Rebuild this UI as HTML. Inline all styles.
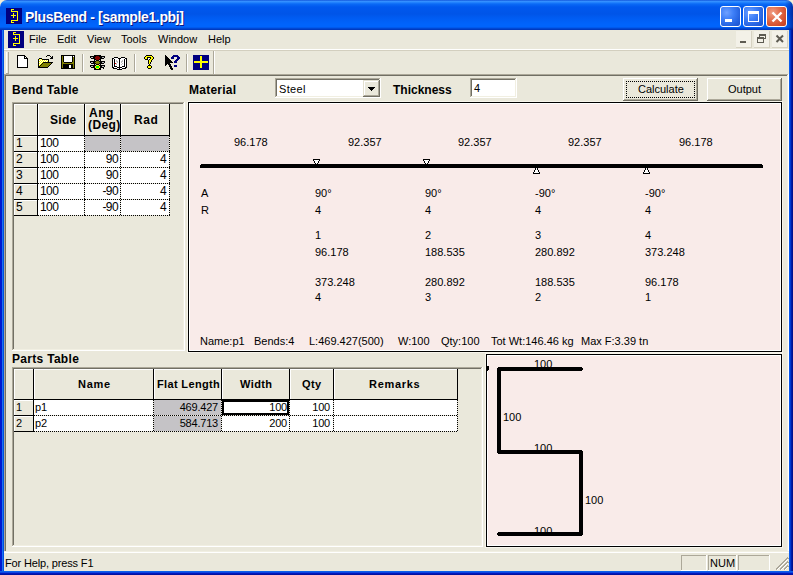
<!DOCTYPE html><html><head><meta charset="utf-8"><style>
html,body{margin:0;padding:0;}
body{width:793px;height:575px;position:relative;overflow:hidden;background:#F2EDD8;}
.r,.t{position:absolute;}
.t{white-space:pre;}
</style></head><body>
<div class="r" style="left:0;top:0;width:793px;height:575px;background:#EAE8DB;border-radius:7px 7px 0 0"></div>
<div class="r" style="left:0;top:0;width:793px;height:30px;border-radius:7px 7px 0 0;background:linear-gradient(to bottom,#0040D0 0px,#3D95FF 1px,#2A8AFF 2px,#0A6AF6 4px,#0058EE 7px,#0055E8 14px,#005CF2 18px,#0064FC 24px,#0064FC 27px,#0050E0 28px,#0040C8 29px,#0034B8 30px)"></div>
<div class="r" style="left:0px;top:30px;width:4px;height:545px;background:linear-gradient(to right,#0019CF 0,#0019CF 2px,#1A72F2 2px,#1A72F2 3px,#0050E0 3px)"></div>
<div class="r" style="left:789px;top:30px;width:4px;height:545px;background:linear-gradient(to right,#0A5AEE 0,#0A5AEE 1px,#0038D0 1px,#0038D0 2px,#001CA8 2px,#001CA8 3px,#001090 3px)"></div>
<div class="r" style="left:785px;top:0;width:8px;height:30px;border-top-right-radius:7px;background:linear-gradient(to right,rgba(0,20,120,0) 0,rgba(0,20,120,0.25) 4px,rgba(0,16,110,0.6) 8px)"></div>
<div class="r" style="left:0px;top:571px;width:793px;height:4px;background:linear-gradient(to bottom,#0050E0 0,#1A72F2 1px,#0019CF 2px,#001090 4px)"></div>
<svg class="r" style="left:6px;top:8px" width="16" height="16" viewBox="0 0 16 16">
<rect width="16" height="16" fill="#000080"/>
<path d="M8 1.5H5.5V3.5H11.5V12.5H5.5V14.5H8 M5 7.5H10 M7.5 5V10" stroke="#FFFF00" stroke-width="1" fill="none" shape-rendering="crispEdges"/>
</svg>
<div class="t" style="left:25px;top:9px;font:bold 14px/16px 'Liberation Sans',sans-serif;color:#fff;letter-spacing:-0.36px;text-shadow:1px 1px 0 #0A1883;">PlusBend - [sample1.pbj]</div>
<div class="r" style="left:720px;top:6px;width:19px;height:19px;border:1px solid #fff;border-radius:3px;background:radial-gradient(circle at 30% 30%,#6FA1FF 0,#3F80F8 35%,#2663E0 70%,#1B50CC 100%)"></div>
<div class="r" style="left:725px;top:19px;width:7px;height:3px;background:#fff"></div>
<div class="r" style="left:743px;top:6px;width:19px;height:19px;border:1px solid #fff;border-radius:3px;background:radial-gradient(circle at 30% 30%,#6FA1FF 0,#3F80F8 35%,#2663E0 70%,#1B50CC 100%)"></div>
<div class="r" style="left:748px;top:11px;width:11px;height:11px;box-sizing:border-box;border:1px solid #fff;border-top-width:3px"></div>
<div class="r" style="left:766px;top:6px;width:19px;height:19px;border:1px solid #fff;border-radius:3px;background:radial-gradient(circle at 30% 30%,#F1A088 0,#E37251 35%,#D4502F 70%,#C23D1D 100%)"></div>
<svg class="r" style="left:766px;top:6px" width="21" height="21"><path d="M6.5 6.5L15.5 15.5M15.5 6.5L6.5 15.5" stroke="#fff" stroke-width="2.4"/></svg>
<div class="r" style="left:4px;top:30px;width:785px;height:19px;background:#EAE8DB"></div>
<svg class="r" style="left:8px;top:31px" width="16" height="17" viewBox="0 0 16 17">
<rect width="16" height="17" fill="#000080"/>
<path d="M8 1.5H5.5V3.5H11.5V12.5H5.5V14.5H8 M5 7.5H10 M7.5 5V10" stroke="#FFFF00" stroke-width="1" fill="none" shape-rendering="crispEdges"/>
</svg>
<div class="t" style="left:29px;top:33px;font:11px/12px 'Liberation Sans',sans-serif;color:#000;">File</div>
<div class="t" style="left:57px;top:33px;font:11px/12px 'Liberation Sans',sans-serif;color:#000;">Edit</div>
<div class="t" style="left:87px;top:33px;font:11px/12px 'Liberation Sans',sans-serif;color:#000;">View</div>
<div class="t" style="left:121px;top:33px;font:11px/12px 'Liberation Sans',sans-serif;color:#000;">Tools</div>
<div class="t" style="left:158px;top:33px;font:11px/12px 'Liberation Sans',sans-serif;color:#000;">Window</div>
<div class="t" style="left:208px;top:33px;font:11px/12px 'Liberation Sans',sans-serif;color:#000;">Help</div>
<div class="r" style="left:736px;top:31px;width:16px;height:17px;background:#F3F1E8;box-shadow:inset -1px -1px 0 #D6D2C2"></div>
<div class="r" style="left:740px;top:41px;width:6px;height:2px;background:#5E5C53"></div>
<div class="r" style="left:754px;top:31px;width:16px;height:17px;background:#F3F1E8;box-shadow:inset -1px -1px 0 #D6D2C2"></div>
<div class="r" style="left:759px;top:34px;width:7px;height:5px;box-sizing:border-box;border:1px solid #5E5C53;border-top-width:2px"></div>
<div class="r" style="left:757px;top:37px;width:7px;height:6px;box-sizing:border-box;border:1px solid #5E5C53;border-top-width:2px;background:#F3F1E8"></div>
<div class="r" style="left:772px;top:31px;width:16px;height:17px;background:#F3F1E8;box-shadow:inset -1px -1px 0 #D6D2C2"></div>
<svg class="r" style="left:772px;top:31px" width="16" height="17"><path d="M4.5 4.5L11 11M11 4.5L4.5 11" stroke="#5E5C53" stroke-width="2"/></svg>
<div class="r" style="left:4px;top:49px;width:785px;height:1px;background:#fff"></div>
<div class="r" style="left:4px;top:50px;width:785px;height:24px;background:#EAE8DB"></div>
<div class="r" style="left:6px;top:52px;width:1px;height:21px;background:#fff"></div>
<div class="r" style="left:8px;top:52px;width:1px;height:21px;background:#ACA899"></div>
<div class="r" style="left:6px;top:73px;width:3px;height:1px;background:#ACA899"></div>
<div class="r" style="left:82px;top:54px;width:1px;height:18px;background:#ACA899"></div>
<div class="r" style="left:83px;top:54px;width:1px;height:18px;background:#fff"></div>
<div class="r" style="left:134px;top:54px;width:1px;height:18px;background:#ACA899"></div>
<div class="r" style="left:135px;top:54px;width:1px;height:18px;background:#fff"></div>
<div class="r" style="left:186px;top:54px;width:1px;height:18px;background:#ACA899"></div>
<div class="r" style="left:187px;top:54px;width:1px;height:18px;background:#fff"></div>
<div class="r" style="left:4px;top:50px;width:785px;height:1px;background:#D3CFBF"></div>
<div class="r" style="left:213px;top:51px;width:1px;height:23px;background:#ACA899"></div>
<div class="r" style="left:214px;top:51px;width:1px;height:23px;background:#fff"></div>
<svg class="r" style="left:17px;top:55px" width="11" height="13" shape-rendering="crispEdges"><rect x="0" y="0" width="8" height="1" fill="#000"/><rect x="0" y="1" width="1" height="1" fill="#000"/><rect x="1" y="1" width="6" height="1" fill="#fff"/><rect x="7" y="1" width="2" height="1" fill="#000"/><rect x="0" y="2" width="1" height="1" fill="#000"/><rect x="1" y="2" width="6" height="1" fill="#fff"/><rect x="7" y="2" width="1" height="1" fill="#000"/><rect x="8" y="2" width="1" height="1" fill="#fff"/><rect x="9" y="2" width="1" height="1" fill="#000"/><rect x="0" y="3" width="1" height="1" fill="#000"/><rect x="1" y="3" width="6" height="1" fill="#fff"/><rect x="7" y="3" width="4" height="1" fill="#000"/><rect x="0" y="4" width="1" height="1" fill="#000"/><rect x="1" y="4" width="9" height="1" fill="#fff"/><rect x="10" y="4" width="1" height="1" fill="#000"/><rect x="0" y="5" width="1" height="1" fill="#000"/><rect x="1" y="5" width="9" height="1" fill="#fff"/><rect x="10" y="5" width="1" height="1" fill="#000"/><rect x="0" y="6" width="1" height="1" fill="#000"/><rect x="1" y="6" width="9" height="1" fill="#fff"/><rect x="10" y="6" width="1" height="1" fill="#000"/><rect x="0" y="7" width="1" height="1" fill="#000"/><rect x="1" y="7" width="9" height="1" fill="#fff"/><rect x="10" y="7" width="1" height="1" fill="#000"/><rect x="0" y="8" width="1" height="1" fill="#000"/><rect x="1" y="8" width="9" height="1" fill="#fff"/><rect x="10" y="8" width="1" height="1" fill="#000"/><rect x="0" y="9" width="1" height="1" fill="#000"/><rect x="1" y="9" width="9" height="1" fill="#fff"/><rect x="10" y="9" width="1" height="1" fill="#000"/><rect x="0" y="10" width="1" height="1" fill="#000"/><rect x="1" y="10" width="9" height="1" fill="#fff"/><rect x="10" y="10" width="1" height="1" fill="#000"/><rect x="0" y="11" width="1" height="1" fill="#000"/><rect x="1" y="11" width="9" height="1" fill="#fff"/><rect x="10" y="11" width="1" height="1" fill="#000"/><rect x="0" y="12" width="11" height="1" fill="#000"/></svg><svg class="r" style="left:37px;top:54px" width="16" height="14" shape-rendering="crispEdges"><rect x="10" y="1" width="3" height="1" fill="#000"/><rect x="9" y="2" width="1" height="1" fill="#000"/><rect x="13" y="2" width="1" height="1" fill="#000"/><rect x="15" y="2" width="1" height="1" fill="#000"/><rect x="14" y="3" width="2" height="1" fill="#000"/><rect x="2" y="4" width="3" height="1" fill="#000"/><rect x="13" y="4" width="3" height="1" fill="#000"/><rect x="1" y="5" width="1" height="1" fill="#000"/><rect x="2" y="5" width="1" height="1" fill="#FFFF00"/><rect x="3" y="5" width="1" height="1" fill="#fff"/><rect x="4" y="5" width="1" height="1" fill="#FFFF00"/><rect x="5" y="5" width="7" height="1" fill="#000"/><rect x="1" y="6" width="1" height="1" fill="#000"/><rect x="2" y="6" width="1" height="1" fill="#fff"/><rect x="3" y="6" width="1" height="1" fill="#FFFF00"/><rect x="4" y="6" width="1" height="1" fill="#fff"/><rect x="5" y="6" width="1" height="1" fill="#FFFF00"/><rect x="6" y="6" width="1" height="1" fill="#fff"/><rect x="7" y="6" width="1" height="1" fill="#FFFF00"/><rect x="8" y="6" width="1" height="1" fill="#fff"/><rect x="9" y="6" width="1" height="1" fill="#FFFF00"/><rect x="10" y="6" width="1" height="1" fill="#fff"/><rect x="11" y="6" width="1" height="1" fill="#000"/><rect x="1" y="7" width="1" height="1" fill="#000"/><rect x="2" y="7" width="1" height="1" fill="#FFFF00"/><rect x="3" y="7" width="1" height="1" fill="#fff"/><rect x="4" y="7" width="1" height="1" fill="#FFFF00"/><rect x="5" y="7" width="1" height="1" fill="#fff"/><rect x="6" y="7" width="1" height="1" fill="#FFFF00"/><rect x="7" y="7" width="1" height="1" fill="#fff"/><rect x="8" y="7" width="1" height="1" fill="#FFFF00"/><rect x="9" y="7" width="1" height="1" fill="#fff"/><rect x="10" y="7" width="1" height="1" fill="#FFFF00"/><rect x="11" y="7" width="1" height="1" fill="#000"/><rect x="1" y="8" width="1" height="1" fill="#000"/><rect x="2" y="8" width="1" height="1" fill="#fff"/><rect x="3" y="8" width="1" height="1" fill="#FFFF00"/><rect x="4" y="8" width="1" height="1" fill="#fff"/><rect x="5" y="8" width="1" height="1" fill="#FFFF00"/><rect x="6" y="8" width="10" height="1" fill="#000"/><rect x="1" y="9" width="1" height="1" fill="#000"/><rect x="2" y="9" width="1" height="1" fill="#FFFF00"/><rect x="3" y="9" width="1" height="1" fill="#fff"/><rect x="4" y="9" width="1" height="1" fill="#FFFF00"/><rect x="5" y="9" width="1" height="1" fill="#000"/><rect x="6" y="9" width="8" height="1" fill="#808000"/><rect x="14" y="9" width="1" height="1" fill="#000"/><rect x="1" y="10" width="1" height="1" fill="#000"/><rect x="2" y="10" width="1" height="1" fill="#fff"/><rect x="3" y="10" width="1" height="1" fill="#FFFF00"/><rect x="4" y="10" width="1" height="1" fill="#000"/><rect x="5" y="10" width="8" height="1" fill="#808000"/><rect x="13" y="10" width="1" height="1" fill="#000"/><rect x="1" y="11" width="1" height="1" fill="#000"/><rect x="2" y="11" width="1" height="1" fill="#FFFF00"/><rect x="3" y="11" width="1" height="1" fill="#000"/><rect x="4" y="11" width="8" height="1" fill="#808000"/><rect x="12" y="11" width="1" height="1" fill="#000"/><rect x="1" y="12" width="2" height="1" fill="#000"/><rect x="3" y="12" width="8" height="1" fill="#808000"/><rect x="11" y="12" width="1" height="1" fill="#000"/><rect x="1" y="13" width="10" height="1" fill="#000"/></svg><svg class="r" style="left:61px;top:55px" width="14" height="14" shape-rendering="crispEdges"><rect x="0" y="0" width="14" height="1" fill="#000"/><rect x="0" y="1" width="1" height="1" fill="#000"/><rect x="1" y="1" width="1" height="1" fill="#808000"/><rect x="2" y="1" width="1" height="1" fill="#000"/><rect x="3" y="1" width="8" height="1" fill="#fff"/><rect x="11" y="1" width="1" height="1" fill="#000"/><rect x="12" y="1" width="1" height="1" fill="#fff"/><rect x="13" y="1" width="1" height="1" fill="#000"/><rect x="0" y="2" width="1" height="1" fill="#000"/><rect x="1" y="2" width="1" height="1" fill="#808000"/><rect x="2" y="2" width="1" height="1" fill="#000"/><rect x="3" y="2" width="8" height="1" fill="#fff"/><rect x="11" y="2" width="1" height="1" fill="#000"/><rect x="12" y="2" width="1" height="1" fill="#808000"/><rect x="13" y="2" width="1" height="1" fill="#000"/><rect x="0" y="3" width="1" height="1" fill="#000"/><rect x="1" y="3" width="1" height="1" fill="#808000"/><rect x="2" y="3" width="1" height="1" fill="#000"/><rect x="3" y="3" width="8" height="1" fill="#fff"/><rect x="11" y="3" width="1" height="1" fill="#000"/><rect x="12" y="3" width="1" height="1" fill="#808000"/><rect x="13" y="3" width="1" height="1" fill="#000"/><rect x="0" y="4" width="1" height="1" fill="#000"/><rect x="1" y="4" width="1" height="1" fill="#808000"/><rect x="2" y="4" width="1" height="1" fill="#000"/><rect x="3" y="4" width="8" height="1" fill="#fff"/><rect x="11" y="4" width="1" height="1" fill="#000"/><rect x="12" y="4" width="1" height="1" fill="#808000"/><rect x="13" y="4" width="1" height="1" fill="#000"/><rect x="0" y="5" width="1" height="1" fill="#000"/><rect x="1" y="5" width="1" height="1" fill="#808000"/><rect x="2" y="5" width="1" height="1" fill="#000"/><rect x="3" y="5" width="8" height="1" fill="#fff"/><rect x="11" y="5" width="1" height="1" fill="#000"/><rect x="12" y="5" width="1" height="1" fill="#808000"/><rect x="13" y="5" width="1" height="1" fill="#000"/><rect x="0" y="6" width="1" height="1" fill="#000"/><rect x="1" y="6" width="1" height="1" fill="#808000"/><rect x="2" y="6" width="1" height="1" fill="#000"/><rect x="3" y="6" width="8" height="1" fill="#fff"/><rect x="11" y="6" width="1" height="1" fill="#000"/><rect x="12" y="6" width="1" height="1" fill="#808000"/><rect x="13" y="6" width="1" height="1" fill="#000"/><rect x="0" y="7" width="1" height="1" fill="#000"/><rect x="1" y="7" width="2" height="1" fill="#808000"/><rect x="3" y="7" width="8" height="1" fill="#000"/><rect x="11" y="7" width="2" height="1" fill="#808000"/><rect x="13" y="7" width="1" height="1" fill="#000"/><rect x="0" y="8" width="1" height="1" fill="#000"/><rect x="1" y="8" width="12" height="1" fill="#808000"/><rect x="13" y="8" width="1" height="1" fill="#000"/><rect x="0" y="9" width="1" height="1" fill="#000"/><rect x="1" y="9" width="1" height="1" fill="#808000"/><rect x="2" y="9" width="10" height="1" fill="#000"/><rect x="12" y="9" width="1" height="1" fill="#808000"/><rect x="13" y="9" width="1" height="1" fill="#000"/><rect x="0" y="10" width="1" height="1" fill="#000"/><rect x="1" y="10" width="1" height="1" fill="#808000"/><rect x="2" y="10" width="6" height="1" fill="#000"/><rect x="8" y="10" width="2" height="1" fill="#fff"/><rect x="10" y="10" width="2" height="1" fill="#000"/><rect x="12" y="10" width="1" height="1" fill="#808000"/><rect x="13" y="10" width="1" height="1" fill="#000"/><rect x="0" y="11" width="1" height="1" fill="#000"/><rect x="1" y="11" width="1" height="1" fill="#808000"/><rect x="2" y="11" width="6" height="1" fill="#000"/><rect x="8" y="11" width="2" height="1" fill="#fff"/><rect x="10" y="11" width="2" height="1" fill="#000"/><rect x="12" y="11" width="1" height="1" fill="#808000"/><rect x="13" y="11" width="1" height="1" fill="#000"/><rect x="0" y="12" width="1" height="1" fill="#000"/><rect x="1" y="12" width="1" height="1" fill="#808000"/><rect x="2" y="12" width="6" height="1" fill="#000"/><rect x="8" y="12" width="2" height="1" fill="#fff"/><rect x="10" y="12" width="2" height="1" fill="#000"/><rect x="12" y="12" width="1" height="1" fill="#808000"/><rect x="13" y="12" width="1" height="1" fill="#000"/><rect x="0" y="13" width="14" height="1" fill="#000"/></svg><svg class="r" style="left:90px;top:55px" width="15" height="15" shape-rendering="crispEdges"><rect x="4" y="0" width="7" height="1" fill="#000"/><rect x="0" y="1" width="6" height="1" fill="#000"/><rect x="6" y="1" width="3" height="1" fill="#800000"/><rect x="9" y="1" width="6" height="1" fill="#000"/><rect x="0" y="2" width="1" height="1" fill="#000"/><rect x="1" y="2" width="2" height="1" fill="#C0C0C0"/><rect x="3" y="2" width="2" height="1" fill="#000"/><rect x="5" y="2" width="5" height="1" fill="#800000"/><rect x="10" y="2" width="2" height="1" fill="#000"/><rect x="12" y="2" width="2" height="1" fill="#C0C0C0"/><rect x="14" y="2" width="1" height="1" fill="#000"/><rect x="1" y="3" width="4" height="1" fill="#000"/><rect x="5" y="3" width="5" height="1" fill="#800000"/><rect x="10" y="3" width="4" height="1" fill="#000"/><rect x="4" y="4" width="2" height="1" fill="#000"/><rect x="6" y="4" width="3" height="1" fill="#800000"/><rect x="9" y="4" width="2" height="1" fill="#000"/><rect x="4" y="5" width="1" height="1" fill="#000"/><rect x="5" y="5" width="1" height="1" fill="#C0C0C0"/><rect x="6" y="5" width="3" height="1" fill="#000"/><rect x="9" y="5" width="1" height="1" fill="#C0C0C0"/><rect x="10" y="5" width="1" height="1" fill="#000"/><rect x="0" y="6" width="6" height="1" fill="#000"/><rect x="6" y="6" width="3" height="1" fill="#808000"/><rect x="9" y="6" width="6" height="1" fill="#000"/><rect x="0" y="7" width="1" height="1" fill="#000"/><rect x="1" y="7" width="2" height="1" fill="#C0C0C0"/><rect x="3" y="7" width="2" height="1" fill="#000"/><rect x="5" y="7" width="5" height="1" fill="#808000"/><rect x="10" y="7" width="2" height="1" fill="#000"/><rect x="12" y="7" width="2" height="1" fill="#C0C0C0"/><rect x="14" y="7" width="1" height="1" fill="#000"/><rect x="1" y="8" width="5" height="1" fill="#000"/><rect x="6" y="8" width="3" height="1" fill="#808000"/><rect x="9" y="8" width="5" height="1" fill="#000"/><rect x="4" y="9" width="1" height="1" fill="#000"/><rect x="5" y="9" width="1" height="1" fill="#C0C0C0"/><rect x="6" y="9" width="3" height="1" fill="#000"/><rect x="9" y="9" width="1" height="1" fill="#C0C0C0"/><rect x="10" y="9" width="1" height="1" fill="#000"/><rect x="0" y="10" width="6" height="1" fill="#000"/><rect x="6" y="10" width="3" height="1" fill="#FFFF00"/><rect x="9" y="10" width="6" height="1" fill="#000"/><rect x="0" y="11" width="1" height="1" fill="#000"/><rect x="1" y="11" width="2" height="1" fill="#C0C0C0"/><rect x="3" y="11" width="2" height="1" fill="#000"/><rect x="5" y="11" width="1" height="1" fill="#FFFF00"/><rect x="6" y="11" width="3" height="1" fill="#00FF00"/><rect x="9" y="11" width="1" height="1" fill="#FFFF00"/><rect x="10" y="11" width="2" height="1" fill="#000"/><rect x="12" y="11" width="2" height="1" fill="#C0C0C0"/><rect x="14" y="11" width="1" height="1" fill="#000"/><rect x="1" y="12" width="4" height="1" fill="#000"/><rect x="5" y="12" width="1" height="1" fill="#FFFF00"/><rect x="6" y="12" width="3" height="1" fill="#00FF00"/><rect x="9" y="12" width="1" height="1" fill="#FFFF00"/><rect x="10" y="12" width="4" height="1" fill="#000"/><rect x="4" y="13" width="2" height="1" fill="#000"/><rect x="6" y="13" width="3" height="1" fill="#FFFF00"/><rect x="9" y="13" width="2" height="1" fill="#000"/><rect x="13" y="13" width="1" height="1" fill="#000"/><rect x="4" y="14" width="7" height="1" fill="#000"/></svg><svg class="r" style="left:112px;top:57px" width="15" height="13" shape-rendering="crispEdges"><rect x="2" y="0" width="4" height="1" fill="#000"/><rect x="9" y="0" width="4" height="1" fill="#000"/><rect x="0" y="1" width="2" height="1" fill="#000"/><rect x="2" y="1" width="4" height="1" fill="#fff"/><rect x="6" y="1" width="3" height="1" fill="#000"/><rect x="9" y="1" width="4" height="1" fill="#fff"/><rect x="13" y="1" width="2" height="1" fill="#000"/><rect x="0" y="2" width="1" height="1" fill="#000"/><rect x="1" y="2" width="1" height="1" fill="#fff"/><rect x="2" y="2" width="1" height="1" fill="#000"/><rect x="3" y="2" width="4" height="1" fill="#fff"/><rect x="7" y="2" width="1" height="1" fill="#000"/><rect x="8" y="2" width="4" height="1" fill="#fff"/><rect x="12" y="2" width="1" height="1" fill="#000"/><rect x="13" y="2" width="1" height="1" fill="#fff"/><rect x="14" y="2" width="1" height="1" fill="#000"/><rect x="0" y="3" width="1" height="1" fill="#000"/><rect x="1" y="3" width="1" height="1" fill="#fff"/><rect x="2" y="3" width="1" height="1" fill="#000"/><rect x="3" y="3" width="1" height="1" fill="#fff"/><rect x="4" y="3" width="1" height="1" fill="#C0C0C0"/><rect x="5" y="3" width="2" height="1" fill="#fff"/><rect x="7" y="3" width="1" height="1" fill="#000"/><rect x="8" y="3" width="2" height="1" fill="#fff"/><rect x="10" y="3" width="1" height="1" fill="#C0C0C0"/><rect x="11" y="3" width="1" height="1" fill="#fff"/><rect x="12" y="3" width="1" height="1" fill="#000"/><rect x="13" y="3" width="1" height="1" fill="#fff"/><rect x="14" y="3" width="1" height="1" fill="#000"/><rect x="0" y="4" width="1" height="1" fill="#000"/><rect x="1" y="4" width="1" height="1" fill="#fff"/><rect x="2" y="4" width="1" height="1" fill="#000"/><rect x="3" y="4" width="1" height="1" fill="#fff"/><rect x="4" y="4" width="2" height="1" fill="#C0C0C0"/><rect x="6" y="4" width="1" height="1" fill="#fff"/><rect x="7" y="4" width="1" height="1" fill="#000"/><rect x="8" y="4" width="1" height="1" fill="#fff"/><rect x="9" y="4" width="2" height="1" fill="#C0C0C0"/><rect x="11" y="4" width="1" height="1" fill="#fff"/><rect x="12" y="4" width="1" height="1" fill="#000"/><rect x="13" y="4" width="1" height="1" fill="#fff"/><rect x="14" y="4" width="1" height="1" fill="#000"/><rect x="0" y="5" width="1" height="1" fill="#000"/><rect x="1" y="5" width="1" height="1" fill="#fff"/><rect x="2" y="5" width="1" height="1" fill="#000"/><rect x="3" y="5" width="2" height="1" fill="#fff"/><rect x="5" y="5" width="1" height="1" fill="#C0C0C0"/><rect x="6" y="5" width="1" height="1" fill="#fff"/><rect x="7" y="5" width="1" height="1" fill="#000"/><rect x="8" y="5" width="1" height="1" fill="#fff"/><rect x="9" y="5" width="1" height="1" fill="#C0C0C0"/><rect x="10" y="5" width="2" height="1" fill="#fff"/><rect x="12" y="5" width="1" height="1" fill="#000"/><rect x="13" y="5" width="1" height="1" fill="#fff"/><rect x="14" y="5" width="1" height="1" fill="#000"/><rect x="0" y="6" width="1" height="1" fill="#000"/><rect x="1" y="6" width="1" height="1" fill="#fff"/><rect x="2" y="6" width="1" height="1" fill="#000"/><rect x="3" y="6" width="1" height="1" fill="#FF0000"/><rect x="4" y="6" width="1" height="1" fill="#C0C0C0"/><rect x="5" y="6" width="2" height="1" fill="#fff"/><rect x="7" y="6" width="1" height="1" fill="#000"/><rect x="8" y="6" width="2" height="1" fill="#fff"/><rect x="10" y="6" width="1" height="1" fill="#C0C0C0"/><rect x="11" y="6" width="1" height="1" fill="#fff"/><rect x="12" y="6" width="1" height="1" fill="#000"/><rect x="13" y="6" width="1" height="1" fill="#fff"/><rect x="14" y="6" width="1" height="1" fill="#000"/><rect x="0" y="7" width="1" height="1" fill="#000"/><rect x="1" y="7" width="1" height="1" fill="#fff"/><rect x="2" y="7" width="1" height="1" fill="#000"/><rect x="3" y="7" width="1" height="1" fill="#fff"/><rect x="4" y="7" width="1" height="1" fill="#C0C0C0"/><rect x="5" y="7" width="2" height="1" fill="#fff"/><rect x="7" y="7" width="1" height="1" fill="#000"/><rect x="8" y="7" width="1" height="1" fill="#fff"/><rect x="9" y="7" width="1" height="1" fill="#C0C0C0"/><rect x="10" y="7" width="2" height="1" fill="#fff"/><rect x="12" y="7" width="1" height="1" fill="#000"/><rect x="13" y="7" width="1" height="1" fill="#fff"/><rect x="14" y="7" width="1" height="1" fill="#000"/><rect x="0" y="8" width="1" height="1" fill="#000"/><rect x="1" y="8" width="1" height="1" fill="#fff"/><rect x="2" y="8" width="1" height="1" fill="#000"/><rect x="3" y="8" width="4" height="1" fill="#fff"/><rect x="7" y="8" width="1" height="1" fill="#000"/><rect x="8" y="8" width="4" height="1" fill="#fff"/><rect x="12" y="8" width="1" height="1" fill="#000"/><rect x="13" y="8" width="1" height="1" fill="#fff"/><rect x="14" y="8" width="1" height="1" fill="#000"/><rect x="0" y="9" width="1" height="1" fill="#000"/><rect x="1" y="9" width="1" height="1" fill="#fff"/><rect x="2" y="9" width="3" height="1" fill="#000"/><rect x="5" y="9" width="2" height="1" fill="#fff"/><rect x="7" y="9" width="1" height="1" fill="#000"/><rect x="8" y="9" width="2" height="1" fill="#fff"/><rect x="10" y="9" width="3" height="1" fill="#000"/><rect x="13" y="9" width="1" height="1" fill="#fff"/><rect x="14" y="9" width="1" height="1" fill="#000"/><rect x="0" y="10" width="2" height="1" fill="#000"/><rect x="2" y="10" width="3" height="1" fill="#fff"/><rect x="5" y="10" width="5" height="1" fill="#000"/><rect x="10" y="10" width="3" height="1" fill="#fff"/><rect x="13" y="10" width="2" height="1" fill="#000"/><rect x="1" y="11" width="4" height="1" fill="#000"/><rect x="5" y="11" width="2" height="1" fill="#fff"/><rect x="7" y="11" width="1" height="1" fill="#000"/><rect x="8" y="11" width="2" height="1" fill="#fff"/><rect x="10" y="11" width="4" height="1" fill="#000"/><rect x="5" y="12" width="5" height="1" fill="#000"/></svg><svg class="r" style="left:144px;top:55px" width="10" height="14" shape-rendering="crispEdges"><rect x="2" y="0" width="6" height="1" fill="#000"/><rect x="1" y="1" width="1" height="1" fill="#000"/><rect x="2" y="1" width="6" height="1" fill="#FFFF00"/><rect x="8" y="1" width="1" height="1" fill="#000"/><rect x="0" y="2" width="1" height="1" fill="#000"/><rect x="1" y="2" width="2" height="1" fill="#FFFF00"/><rect x="3" y="2" width="4" height="1" fill="#000"/><rect x="7" y="2" width="2" height="1" fill="#FFFF00"/><rect x="9" y="2" width="1" height="1" fill="#000"/><rect x="0" y="3" width="1" height="1" fill="#000"/><rect x="1" y="3" width="2" height="1" fill="#FFFF00"/><rect x="3" y="3" width="1" height="1" fill="#000"/><rect x="4" y="3" width="2" height="1" fill="#fff"/><rect x="6" y="3" width="1" height="1" fill="#000"/><rect x="7" y="3" width="2" height="1" fill="#FFFF00"/><rect x="9" y="3" width="1" height="1" fill="#000"/><rect x="1" y="4" width="3" height="1" fill="#000"/><rect x="5" y="4" width="1" height="1" fill="#000"/><rect x="6" y="4" width="2" height="1" fill="#FFFF00"/><rect x="8" y="4" width="1" height="1" fill="#000"/><rect x="4" y="5" width="1" height="1" fill="#000"/><rect x="5" y="5" width="2" height="1" fill="#FFFF00"/><rect x="7" y="5" width="1" height="1" fill="#000"/><rect x="4" y="6" width="1" height="1" fill="#000"/><rect x="5" y="6" width="2" height="1" fill="#FFFF00"/><rect x="7" y="6" width="1" height="1" fill="#000"/><rect x="4" y="7" width="1" height="1" fill="#000"/><rect x="5" y="7" width="1" height="1" fill="#FFFF00"/><rect x="6" y="7" width="1" height="1" fill="#000"/><rect x="4" y="8" width="1" height="1" fill="#000"/><rect x="5" y="8" width="1" height="1" fill="#FFFF00"/><rect x="6" y="8" width="1" height="1" fill="#000"/><rect x="5" y="9" width="1" height="1" fill="#000"/><rect x="4" y="10" width="3" height="1" fill="#000"/><rect x="3" y="11" width="1" height="1" fill="#000"/><rect x="4" y="11" width="3" height="1" fill="#FFFF00"/><rect x="7" y="11" width="1" height="1" fill="#000"/><rect x="3" y="12" width="1" height="1" fill="#000"/><rect x="4" y="12" width="3" height="1" fill="#FFFF00"/><rect x="7" y="12" width="1" height="1" fill="#000"/><rect x="4" y="13" width="3" height="1" fill="#000"/></svg><svg class="r" style="left:165px;top:55px" width="8" height="15" shape-rendering="crispEdges"><rect x="0" y="0" width="1" height="1" fill="#000"/><rect x="0" y="1" width="2" height="1" fill="#000"/><rect x="0" y="2" width="3" height="1" fill="#000"/><rect x="0" y="3" width="4" height="1" fill="#000"/><rect x="0" y="4" width="5" height="1" fill="#000"/><rect x="0" y="5" width="6" height="1" fill="#000"/><rect x="0" y="6" width="7" height="1" fill="#000"/><rect x="0" y="7" width="8" height="1" fill="#000"/><rect x="0" y="8" width="5" height="1" fill="#000"/><rect x="0" y="9" width="2" height="1" fill="#000"/><rect x="3" y="9" width="3" height="1" fill="#000"/><rect x="0" y="10" width="1" height="1" fill="#000"/><rect x="4" y="10" width="2" height="1" fill="#000"/><rect x="4" y="11" width="3" height="1" fill="#000"/><rect x="5" y="12" width="2" height="1" fill="#000"/><rect x="5" y="13" width="3" height="1" fill="#000"/><rect x="6" y="14" width="2" height="1" fill="#000"/></svg><svg class="r" style="left:171px;top:55px" width="9" height="12" shape-rendering="crispEdges"><rect x="2" y="0" width="5" height="1" fill="#000080"/><rect x="1" y="1" width="7" height="1" fill="#000080"/><rect x="0" y="2" width="3" height="1" fill="#000080"/><rect x="6" y="2" width="3" height="1" fill="#000080"/><rect x="0" y="3" width="3" height="1" fill="#000080"/><rect x="6" y="3" width="3" height="1" fill="#000080"/><rect x="5" y="4" width="3" height="1" fill="#000080"/><rect x="4" y="5" width="3" height="1" fill="#000080"/><rect x="3" y="6" width="3" height="1" fill="#000080"/><rect x="3" y="7" width="3" height="1" fill="#000080"/><rect x="3" y="10" width="3" height="1" fill="#000080"/><rect x="3" y="11" width="3" height="1" fill="#000080"/></svg><div class="r" style="left:193px;top:55px;width:16px;height:15px;background:#000080"></div><div class="r" style="left:194px;top:61px;width:14px;height:2px;background:#FFFF00"></div><div class="r" style="left:200px;top:56px;width:2px;height:12px;background:#FFFF00"></div>
<div class="r" style="left:4px;top:74px;width:785px;height:1px;background:#ACA899"></div>
<div class="r" style="left:4px;top:75px;width:785px;height:1px;background:#716F64"></div>
<div class="r" style="left:4px;top:74px;width:1px;height:478px;background:#ACA899"></div>
<div class="r" style="left:5px;top:75px;width:1px;height:476px;background:#716F64"></div>
<div class="r" style="left:787px;top:75px;width:1px;height:477px;background:#F1EFE2"></div>
<div class="r" style="left:788px;top:74px;width:1px;height:479px;background:#FFFFFF"></div>
<div class="t" style="left:12px;top:83px;font:bold 12px/14px 'Liberation Sans',sans-serif;color:#000;letter-spacing:0.3px;">Bend Table</div>
<div class="r" style="left:12px;top:102px;width:173px;height:1px;background:#ACA899"></div>
<div class="r" style="left:12px;top:102px;width:1px;height:249px;background:#ACA899"></div>
<div class="r" style="left:13px;top:103px;width:171px;height:1px;background:#716F64"></div>
<div class="r" style="left:13px;top:103px;width:1px;height:247px;background:#716F64"></div>
<div class="r" style="left:12px;top:350px;width:173px;height:1px;background:#FFFFFF"></div>
<div class="r" style="left:184px;top:102px;width:1px;height:249px;background:#FFFFFF"></div>
<div class="r" style="left:13px;top:349px;width:171px;height:1px;background:#F1EFE2"></div>
<div class="r" style="left:183px;top:103px;width:1px;height:247px;background:#F1EFE2"></div>
<div class="r" style="left:14px;top:104px;width:23px;height:1px;background:#fff"></div>
<div class="r" style="left:14px;top:104px;width:1px;height:31px;background:#fff"></div>
<div class="r" style="left:37px;top:104px;width:1px;height:32px;background:#000"></div>
<div class="r" style="left:14px;top:135px;width:24px;height:1px;background:#000"></div>
<div class="r" style="left:38px;top:104px;width:46px;height:1px;background:#fff"></div>
<div class="r" style="left:38px;top:104px;width:1px;height:31px;background:#fff"></div>
<div class="r" style="left:84px;top:104px;width:1px;height:32px;background:#000"></div>
<div class="r" style="left:38px;top:135px;width:47px;height:1px;background:#000"></div>
<div class="r" style="left:85px;top:104px;width:35px;height:1px;background:#fff"></div>
<div class="r" style="left:85px;top:104px;width:1px;height:31px;background:#fff"></div>
<div class="r" style="left:120px;top:104px;width:1px;height:32px;background:#000"></div>
<div class="r" style="left:85px;top:135px;width:36px;height:1px;background:#000"></div>
<div class="r" style="left:121px;top:104px;width:48px;height:1px;background:#fff"></div>
<div class="r" style="left:121px;top:104px;width:1px;height:31px;background:#fff"></div>
<div class="r" style="left:169px;top:104px;width:1px;height:32px;background:#000"></div>
<div class="r" style="left:121px;top:135px;width:49px;height:1px;background:#000"></div>
<div class="r" style="left:14px;top:136px;width:23px;height:1px;background:#fff"></div>
<div class="r" style="left:14px;top:136px;width:1px;height:15px;background:#fff"></div>
<div class="r" style="left:37px;top:136px;width:1px;height:16px;background:#000"></div>
<div class="r" style="left:14px;top:151px;width:24px;height:1px;background:#000"></div>
<div class="r" style="left:38px;top:136px;width:46px;height:15px;background:#FFFFFF"></div>
<div class="r" style="left:84px;top:136px;width:1px;height:16px;background:repeating-linear-gradient(to bottom,#000 0,#000 1px,transparent 1px,transparent 2px)"></div>
<div class="r" style="left:38px;top:151px;width:47px;height:1px;background:repeating-linear-gradient(to right,#000 0,#000 1px,transparent 1px,transparent 2px)"></div>
<div class="r" style="left:85px;top:136px;width:35px;height:15px;background:#C5C3C6"></div>
<div class="r" style="left:120px;top:136px;width:1px;height:16px;background:repeating-linear-gradient(to bottom,#000 0,#000 1px,transparent 1px,transparent 2px)"></div>
<div class="r" style="left:85px;top:151px;width:36px;height:1px;background:repeating-linear-gradient(to right,#000 0,#000 1px,transparent 1px,transparent 2px)"></div>
<div class="r" style="left:121px;top:136px;width:48px;height:15px;background:#C5C3C6"></div>
<div class="r" style="left:169px;top:136px;width:1px;height:16px;background:repeating-linear-gradient(to bottom,#000 0,#000 1px,transparent 1px,transparent 2px)"></div>
<div class="r" style="left:121px;top:151px;width:49px;height:1px;background:repeating-linear-gradient(to right,#000 0,#000 1px,transparent 1px,transparent 2px)"></div>
<div class="r" style="left:14px;top:152px;width:23px;height:1px;background:#fff"></div>
<div class="r" style="left:14px;top:152px;width:1px;height:15px;background:#fff"></div>
<div class="r" style="left:37px;top:152px;width:1px;height:16px;background:#000"></div>
<div class="r" style="left:14px;top:167px;width:24px;height:1px;background:#000"></div>
<div class="r" style="left:38px;top:152px;width:46px;height:15px;background:#FFFFFF"></div>
<div class="r" style="left:84px;top:152px;width:1px;height:16px;background:repeating-linear-gradient(to bottom,#000 0,#000 1px,transparent 1px,transparent 2px)"></div>
<div class="r" style="left:38px;top:167px;width:47px;height:1px;background:repeating-linear-gradient(to right,#000 0,#000 1px,transparent 1px,transparent 2px)"></div>
<div class="r" style="left:85px;top:152px;width:35px;height:15px;background:#FFFFFF"></div>
<div class="r" style="left:120px;top:152px;width:1px;height:16px;background:repeating-linear-gradient(to bottom,#000 0,#000 1px,transparent 1px,transparent 2px)"></div>
<div class="r" style="left:85px;top:167px;width:36px;height:1px;background:repeating-linear-gradient(to right,#000 0,#000 1px,transparent 1px,transparent 2px)"></div>
<div class="r" style="left:121px;top:152px;width:48px;height:15px;background:#FFFFFF"></div>
<div class="r" style="left:169px;top:152px;width:1px;height:16px;background:repeating-linear-gradient(to bottom,#000 0,#000 1px,transparent 1px,transparent 2px)"></div>
<div class="r" style="left:121px;top:167px;width:49px;height:1px;background:repeating-linear-gradient(to right,#000 0,#000 1px,transparent 1px,transparent 2px)"></div>
<div class="r" style="left:14px;top:168px;width:23px;height:1px;background:#fff"></div>
<div class="r" style="left:14px;top:168px;width:1px;height:15px;background:#fff"></div>
<div class="r" style="left:37px;top:168px;width:1px;height:16px;background:#000"></div>
<div class="r" style="left:14px;top:183px;width:24px;height:1px;background:#000"></div>
<div class="r" style="left:38px;top:168px;width:46px;height:15px;background:#FFFFFF"></div>
<div class="r" style="left:84px;top:168px;width:1px;height:16px;background:repeating-linear-gradient(to bottom,#000 0,#000 1px,transparent 1px,transparent 2px)"></div>
<div class="r" style="left:38px;top:183px;width:47px;height:1px;background:repeating-linear-gradient(to right,#000 0,#000 1px,transparent 1px,transparent 2px)"></div>
<div class="r" style="left:85px;top:168px;width:35px;height:15px;background:#FFFFFF"></div>
<div class="r" style="left:120px;top:168px;width:1px;height:16px;background:repeating-linear-gradient(to bottom,#000 0,#000 1px,transparent 1px,transparent 2px)"></div>
<div class="r" style="left:85px;top:183px;width:36px;height:1px;background:repeating-linear-gradient(to right,#000 0,#000 1px,transparent 1px,transparent 2px)"></div>
<div class="r" style="left:121px;top:168px;width:48px;height:15px;background:#FFFFFF"></div>
<div class="r" style="left:169px;top:168px;width:1px;height:16px;background:repeating-linear-gradient(to bottom,#000 0,#000 1px,transparent 1px,transparent 2px)"></div>
<div class="r" style="left:121px;top:183px;width:49px;height:1px;background:repeating-linear-gradient(to right,#000 0,#000 1px,transparent 1px,transparent 2px)"></div>
<div class="r" style="left:14px;top:184px;width:23px;height:1px;background:#fff"></div>
<div class="r" style="left:14px;top:184px;width:1px;height:15px;background:#fff"></div>
<div class="r" style="left:37px;top:184px;width:1px;height:16px;background:#000"></div>
<div class="r" style="left:14px;top:199px;width:24px;height:1px;background:#000"></div>
<div class="r" style="left:38px;top:184px;width:46px;height:15px;background:#FFFFFF"></div>
<div class="r" style="left:84px;top:184px;width:1px;height:16px;background:repeating-linear-gradient(to bottom,#000 0,#000 1px,transparent 1px,transparent 2px)"></div>
<div class="r" style="left:38px;top:199px;width:47px;height:1px;background:repeating-linear-gradient(to right,#000 0,#000 1px,transparent 1px,transparent 2px)"></div>
<div class="r" style="left:85px;top:184px;width:35px;height:15px;background:#FFFFFF"></div>
<div class="r" style="left:120px;top:184px;width:1px;height:16px;background:repeating-linear-gradient(to bottom,#000 0,#000 1px,transparent 1px,transparent 2px)"></div>
<div class="r" style="left:85px;top:199px;width:36px;height:1px;background:repeating-linear-gradient(to right,#000 0,#000 1px,transparent 1px,transparent 2px)"></div>
<div class="r" style="left:121px;top:184px;width:48px;height:15px;background:#FFFFFF"></div>
<div class="r" style="left:169px;top:184px;width:1px;height:16px;background:repeating-linear-gradient(to bottom,#000 0,#000 1px,transparent 1px,transparent 2px)"></div>
<div class="r" style="left:121px;top:199px;width:49px;height:1px;background:repeating-linear-gradient(to right,#000 0,#000 1px,transparent 1px,transparent 2px)"></div>
<div class="r" style="left:14px;top:200px;width:23px;height:1px;background:#fff"></div>
<div class="r" style="left:14px;top:200px;width:1px;height:15px;background:#fff"></div>
<div class="r" style="left:37px;top:200px;width:1px;height:16px;background:#000"></div>
<div class="r" style="left:14px;top:215px;width:24px;height:1px;background:#000"></div>
<div class="r" style="left:38px;top:200px;width:46px;height:15px;background:#FFFFFF"></div>
<div class="r" style="left:84px;top:200px;width:1px;height:16px;background:repeating-linear-gradient(to bottom,#000 0,#000 1px,transparent 1px,transparent 2px)"></div>
<div class="r" style="left:38px;top:215px;width:47px;height:1px;background:repeating-linear-gradient(to right,#000 0,#000 1px,transparent 1px,transparent 2px)"></div>
<div class="r" style="left:85px;top:200px;width:35px;height:15px;background:#FFFFFF"></div>
<div class="r" style="left:120px;top:200px;width:1px;height:16px;background:repeating-linear-gradient(to bottom,#000 0,#000 1px,transparent 1px,transparent 2px)"></div>
<div class="r" style="left:85px;top:215px;width:36px;height:1px;background:repeating-linear-gradient(to right,#000 0,#000 1px,transparent 1px,transparent 2px)"></div>
<div class="r" style="left:121px;top:200px;width:48px;height:15px;background:#FFFFFF"></div>
<div class="r" style="left:169px;top:200px;width:1px;height:16px;background:repeating-linear-gradient(to bottom,#000 0,#000 1px,transparent 1px,transparent 2px)"></div>
<div class="r" style="left:121px;top:215px;width:49px;height:1px;background:repeating-linear-gradient(to right,#000 0,#000 1px,transparent 1px,transparent 2px)"></div>
<div class="t" style="left:50px;top:113px;font:bold 12px/14px 'Liberation Sans',sans-serif;color:#000;letter-spacing:0.3px;">Side</div>
<div class="t" style="left:89px;top:106px;font:bold 12px/14px 'Liberation Sans',sans-serif;color:#000;letter-spacing:0.5px;">Ang</div>
<div class="t" style="left:88px;top:118px;font:bold 12px/14px 'Liberation Sans',sans-serif;color:#000;letter-spacing:0.4px;">(Deg)</div>
<div class="t" style="left:134px;top:113px;font:bold 12px/14px 'Liberation Sans',sans-serif;color:#000;letter-spacing:0.6px;">Rad</div>
<div class="t" style="left:16px;top:136px;font:12px/14px 'Liberation Sans',sans-serif;color:#000;letter-spacing:-0.6px;">1</div>
<div class="t" style="left:40px;top:136px;font:12px/14px 'Liberation Sans',sans-serif;color:#000;letter-spacing:-0.6px;">100</div>
<div class="t" style="left:16px;top:152px;font:12px/14px 'Liberation Sans',sans-serif;color:#000;letter-spacing:-0.6px;">2</div>
<div class="t" style="left:40px;top:152px;font:12px/14px 'Liberation Sans',sans-serif;color:#000;letter-spacing:-0.6px;">100</div>
<div class="t" style="left:16px;top:168px;font:12px/14px 'Liberation Sans',sans-serif;color:#000;letter-spacing:-0.6px;">3</div>
<div class="t" style="left:40px;top:168px;font:12px/14px 'Liberation Sans',sans-serif;color:#000;letter-spacing:-0.6px;">100</div>
<div class="t" style="left:16px;top:184px;font:12px/14px 'Liberation Sans',sans-serif;color:#000;letter-spacing:-0.6px;">4</div>
<div class="t" style="left:40px;top:184px;font:12px/14px 'Liberation Sans',sans-serif;color:#000;letter-spacing:-0.6px;">100</div>
<div class="t" style="left:16px;top:200px;font:12px/14px 'Liberation Sans',sans-serif;color:#000;letter-spacing:-0.6px;">5</div>
<div class="t" style="left:40px;top:200px;font:12px/14px 'Liberation Sans',sans-serif;color:#000;letter-spacing:-0.6px;">100</div>
<div class="t" style="left:60px;top:152px;font:12px/14px 'Liberation Sans',sans-serif;color:#000;letter-spacing:-0.6px;width:58px;text-align:right;">90</div>
<div class="t" style="left:100px;top:152px;font:12px/14px 'Liberation Sans',sans-serif;color:#000;letter-spacing:-0.6px;width:66px;text-align:right;">4</div>
<div class="t" style="left:60px;top:168px;font:12px/14px 'Liberation Sans',sans-serif;color:#000;letter-spacing:-0.6px;width:58px;text-align:right;">90</div>
<div class="t" style="left:100px;top:168px;font:12px/14px 'Liberation Sans',sans-serif;color:#000;letter-spacing:-0.6px;width:66px;text-align:right;">4</div>
<div class="t" style="left:60px;top:184px;font:12px/14px 'Liberation Sans',sans-serif;color:#000;letter-spacing:-0.6px;width:58px;text-align:right;">-90</div>
<div class="t" style="left:100px;top:184px;font:12px/14px 'Liberation Sans',sans-serif;color:#000;letter-spacing:-0.6px;width:66px;text-align:right;">4</div>
<div class="t" style="left:60px;top:200px;font:12px/14px 'Liberation Sans',sans-serif;color:#000;letter-spacing:-0.6px;width:58px;text-align:right;">-90</div>
<div class="t" style="left:100px;top:200px;font:12px/14px 'Liberation Sans',sans-serif;color:#000;letter-spacing:-0.6px;width:66px;text-align:right;">4</div>
<div class="t" style="left:189px;top:83px;font:bold 12px/14px 'Liberation Sans',sans-serif;color:#000;letter-spacing:0.25px;">Material</div>
<div class="r" style="left:275px;top:78px;width:106px;height:20px;background:#fff"></div>
<div class="r" style="left:275px;top:78px;width:106px;height:1px;background:#ACA899"></div>
<div class="r" style="left:275px;top:78px;width:1px;height:20px;background:#ACA899"></div>
<div class="r" style="left:276px;top:79px;width:104px;height:1px;background:#716F64"></div>
<div class="r" style="left:276px;top:79px;width:1px;height:18px;background:#716F64"></div>
<div class="r" style="left:275px;top:97px;width:106px;height:1px;background:#FFFFFF"></div>
<div class="r" style="left:380px;top:78px;width:1px;height:20px;background:#FFFFFF"></div>
<div class="r" style="left:276px;top:96px;width:104px;height:1px;background:#F1EFE2"></div>
<div class="r" style="left:379px;top:79px;width:1px;height:18px;background:#F1EFE2"></div>
<div class="r" style="left:363px;top:80px;width:17px;height:17px;background:#EAE8DB;box-shadow:inset -1px -1px 0 #716F64, inset 1px 1px 0 #E3E0D0, inset -2px -2px 0 #ACA899, inset 2px 2px 0 #fff"></div>
<svg class="r" style="left:368px;top:87px" width="7" height="4" shape-rendering="crispEdges"><path d="M0 0H7V1H6V2H5V3H4V4H3V3H2V2H1V1H0Z" fill="#000"/></svg>
<div class="t" style="left:279px;top:83px;font:11px/12px 'Liberation Sans',sans-serif;color:#000;letter-spacing:0.35px;">Steel</div>
<div class="t" style="left:393px;top:83px;font:bold 12px/14px 'Liberation Sans',sans-serif;color:#000;">Thickness</div>
<div class="r" style="left:470px;top:78px;width:47px;height:20px;background:#fff"></div>
<div class="r" style="left:470px;top:78px;width:47px;height:1px;background:#ACA899"></div>
<div class="r" style="left:470px;top:78px;width:1px;height:20px;background:#ACA899"></div>
<div class="r" style="left:471px;top:79px;width:45px;height:1px;background:#716F64"></div>
<div class="r" style="left:471px;top:79px;width:1px;height:18px;background:#716F64"></div>
<div class="r" style="left:470px;top:97px;width:47px;height:1px;background:#FFFFFF"></div>
<div class="r" style="left:516px;top:78px;width:1px;height:20px;background:#FFFFFF"></div>
<div class="r" style="left:471px;top:96px;width:45px;height:1px;background:#F1EFE2"></div>
<div class="r" style="left:515px;top:79px;width:1px;height:18px;background:#F1EFE2"></div>
<div class="t" style="left:474px;top:82px;font:11px/12px 'Liberation Sans',sans-serif;color:#000;">4</div>
<div class="r" style="left:623px;top:78px;width:75px;height:23px;background:#EAE8DB"></div>
<div class="r" style="left:623px;top:78px;width:75px;height:1px;background:#fff"></div>
<div class="r" style="left:623px;top:78px;width:1px;height:23px;background:#fff"></div>
<div class="r" style="left:623px;top:100px;width:75px;height:1px;background:#716F64"></div>
<div class="r" style="left:697px;top:78px;width:1px;height:23px;background:#716F64"></div>
<div class="r" style="left:624px;top:99px;width:73px;height:1px;background:#ACA899"></div>
<div class="r" style="left:696px;top:79px;width:1px;height:21px;background:#ACA899"></div>
<div class="r" style="left:626px;top:81px;width:69px;height:17px;box-sizing:border-box;border:1px dotted #000"></div>
<div class="t" style="left:638px;top:83px;font:11px/12px 'Liberation Sans',sans-serif;color:#000;">Calculate</div>
<div class="r" style="left:707px;top:78px;width:75px;height:23px;background:#EAE8DB"></div>
<div class="r" style="left:707px;top:78px;width:75px;height:1px;background:#fff"></div>
<div class="r" style="left:707px;top:78px;width:1px;height:23px;background:#fff"></div>
<div class="r" style="left:707px;top:100px;width:75px;height:1px;background:#716F64"></div>
<div class="r" style="left:781px;top:78px;width:1px;height:23px;background:#716F64"></div>
<div class="r" style="left:708px;top:99px;width:73px;height:1px;background:#ACA899"></div>
<div class="r" style="left:780px;top:79px;width:1px;height:21px;background:#ACA899"></div>
<div class="t" style="left:728px;top:83px;font:11px/12px 'Liberation Sans',sans-serif;color:#000;">Output</div>
<div class="r" style="left:187px;top:101px;width:596px;height:252px;background:#F7F5EC"></div>
<div class="r" style="left:188px;top:102px;width:594px;height:250px;background:#000"></div>
<div class="r" style="left:189px;top:103px;width:592px;height:248px;background:#FFFFFF"></div>
<div class="r" style="left:190px;top:104px;width:590px;height:246px;background:#F9EBE9"></div>
<div class="r" style="left:200px;top:164px;width:563px;height:4px;background:#000"></div>
<div class="r" style="left:200px;top:164px;width:1px;height:1px;background:#F9EBE9"></div>
<div class="r" style="left:762px;top:164px;width:1px;height:1px;background:#F9EBE9"></div>
<svg class="r" style="left:313px;top:159px" width="7" height="5" shape-rendering="crispEdges"><rect x="0" y="0" width="7" height="1" fill="#000"/><rect x="0" y="1" width="1" height="1" fill="#000"/><rect x="1" y="1" width="5" height="1" fill="#fff"/><rect x="6" y="1" width="1" height="1" fill="#000"/><rect x="1" y="2" width="1" height="1" fill="#000"/><rect x="2" y="2" width="3" height="1" fill="#fff"/><rect x="5" y="2" width="1" height="1" fill="#000"/><rect x="1" y="3" width="1" height="1" fill="#000"/><rect x="2" y="3" width="3" height="1" fill="#fff"/><rect x="5" y="3" width="1" height="1" fill="#000"/><rect x="2" y="4" width="1" height="1" fill="#000"/><rect x="3" y="4" width="1" height="1" fill="#fff"/><rect x="4" y="4" width="1" height="1" fill="#000"/></svg>
<svg class="r" style="left:423px;top:159px" width="7" height="5" shape-rendering="crispEdges"><rect x="0" y="0" width="7" height="1" fill="#000"/><rect x="0" y="1" width="1" height="1" fill="#000"/><rect x="1" y="1" width="5" height="1" fill="#fff"/><rect x="6" y="1" width="1" height="1" fill="#000"/><rect x="1" y="2" width="1" height="1" fill="#000"/><rect x="2" y="2" width="3" height="1" fill="#fff"/><rect x="5" y="2" width="1" height="1" fill="#000"/><rect x="1" y="3" width="1" height="1" fill="#000"/><rect x="2" y="3" width="3" height="1" fill="#fff"/><rect x="5" y="3" width="1" height="1" fill="#000"/><rect x="2" y="4" width="1" height="1" fill="#000"/><rect x="3" y="4" width="1" height="1" fill="#fff"/><rect x="4" y="4" width="1" height="1" fill="#000"/></svg>
<svg class="r" style="left:533px;top:168px" width="7" height="6" shape-rendering="crispEdges"><rect x="2" y="0" width="1" height="1" fill="#000"/><rect x="3" y="0" width="1" height="1" fill="#fff"/><rect x="4" y="0" width="1" height="1" fill="#000"/><rect x="2" y="1" width="1" height="1" fill="#000"/><rect x="3" y="1" width="1" height="1" fill="#fff"/><rect x="4" y="1" width="1" height="1" fill="#000"/><rect x="1" y="2" width="1" height="1" fill="#000"/><rect x="2" y="2" width="3" height="1" fill="#fff"/><rect x="5" y="2" width="1" height="1" fill="#000"/><rect x="1" y="3" width="1" height="1" fill="#000"/><rect x="2" y="3" width="3" height="1" fill="#fff"/><rect x="5" y="3" width="1" height="1" fill="#000"/><rect x="0" y="4" width="1" height="1" fill="#000"/><rect x="1" y="4" width="5" height="1" fill="#fff"/><rect x="6" y="4" width="1" height="1" fill="#000"/><rect x="0" y="5" width="7" height="1" fill="#000"/></svg>
<svg class="r" style="left:643px;top:168px" width="7" height="6" shape-rendering="crispEdges"><rect x="2" y="0" width="1" height="1" fill="#000"/><rect x="3" y="0" width="1" height="1" fill="#fff"/><rect x="4" y="0" width="1" height="1" fill="#000"/><rect x="2" y="1" width="1" height="1" fill="#000"/><rect x="3" y="1" width="1" height="1" fill="#fff"/><rect x="4" y="1" width="1" height="1" fill="#000"/><rect x="1" y="2" width="1" height="1" fill="#000"/><rect x="2" y="2" width="3" height="1" fill="#fff"/><rect x="5" y="2" width="1" height="1" fill="#000"/><rect x="1" y="3" width="1" height="1" fill="#000"/><rect x="2" y="3" width="3" height="1" fill="#fff"/><rect x="5" y="3" width="1" height="1" fill="#000"/><rect x="0" y="4" width="1" height="1" fill="#000"/><rect x="1" y="4" width="5" height="1" fill="#fff"/><rect x="6" y="4" width="1" height="1" fill="#000"/><rect x="0" y="5" width="7" height="1" fill="#000"/></svg>
<div class="t" style="left:234px;top:136px;font:11px/12px 'Liberation Sans',sans-serif;color:#000;">96.178</div>
<div class="t" style="left:348px;top:136px;font:11px/12px 'Liberation Sans',sans-serif;color:#000;">92.357</div>
<div class="t" style="left:458px;top:136px;font:11px/12px 'Liberation Sans',sans-serif;color:#000;">92.357</div>
<div class="t" style="left:568px;top:136px;font:11px/12px 'Liberation Sans',sans-serif;color:#000;">92.357</div>
<div class="t" style="left:679px;top:136px;font:11px/12px 'Liberation Sans',sans-serif;color:#000;">96.178</div>
<div class="t" style="left:201px;top:187px;font:11px/12px 'Liberation Sans',sans-serif;color:#000;">A</div>
<div class="t" style="left:201px;top:204px;font:11px/12px 'Liberation Sans',sans-serif;color:#000;">R</div>
<div class="t" style="left:315px;top:187px;font:11px/12px 'Liberation Sans',sans-serif;color:#000;">90°</div>
<div class="t" style="left:315px;top:204px;font:11px/12px 'Liberation Sans',sans-serif;color:#000;">4</div>
<div class="t" style="left:315px;top:229px;font:11px/12px 'Liberation Sans',sans-serif;color:#000;">1</div>
<div class="t" style="left:315px;top:246px;font:11px/12px 'Liberation Sans',sans-serif;color:#000;">96.178</div>
<div class="t" style="left:315px;top:276px;font:11px/12px 'Liberation Sans',sans-serif;color:#000;">373.248</div>
<div class="t" style="left:315px;top:291px;font:11px/12px 'Liberation Sans',sans-serif;color:#000;">4</div>
<div class="t" style="left:425px;top:187px;font:11px/12px 'Liberation Sans',sans-serif;color:#000;">90°</div>
<div class="t" style="left:425px;top:204px;font:11px/12px 'Liberation Sans',sans-serif;color:#000;">4</div>
<div class="t" style="left:425px;top:229px;font:11px/12px 'Liberation Sans',sans-serif;color:#000;">2</div>
<div class="t" style="left:425px;top:246px;font:11px/12px 'Liberation Sans',sans-serif;color:#000;">188.535</div>
<div class="t" style="left:425px;top:276px;font:11px/12px 'Liberation Sans',sans-serif;color:#000;">280.892</div>
<div class="t" style="left:425px;top:291px;font:11px/12px 'Liberation Sans',sans-serif;color:#000;">3</div>
<div class="t" style="left:535px;top:187px;font:11px/12px 'Liberation Sans',sans-serif;color:#000;">-90°</div>
<div class="t" style="left:535px;top:204px;font:11px/12px 'Liberation Sans',sans-serif;color:#000;">4</div>
<div class="t" style="left:535px;top:229px;font:11px/12px 'Liberation Sans',sans-serif;color:#000;">3</div>
<div class="t" style="left:535px;top:246px;font:11px/12px 'Liberation Sans',sans-serif;color:#000;">280.892</div>
<div class="t" style="left:535px;top:276px;font:11px/12px 'Liberation Sans',sans-serif;color:#000;">188.535</div>
<div class="t" style="left:535px;top:291px;font:11px/12px 'Liberation Sans',sans-serif;color:#000;">2</div>
<div class="t" style="left:645px;top:187px;font:11px/12px 'Liberation Sans',sans-serif;color:#000;">-90°</div>
<div class="t" style="left:645px;top:204px;font:11px/12px 'Liberation Sans',sans-serif;color:#000;">4</div>
<div class="t" style="left:645px;top:229px;font:11px/12px 'Liberation Sans',sans-serif;color:#000;">4</div>
<div class="t" style="left:645px;top:246px;font:11px/12px 'Liberation Sans',sans-serif;color:#000;">373.248</div>
<div class="t" style="left:645px;top:276px;font:11px/12px 'Liberation Sans',sans-serif;color:#000;">96.178</div>
<div class="t" style="left:645px;top:291px;font:11px/12px 'Liberation Sans',sans-serif;color:#000;">1</div>
<div class="t" style="left:200px;top:335px;font:11px/12px 'Liberation Sans',sans-serif;color:#000;">Name:p1</div>
<div class="t" style="left:254px;top:335px;font:11px/12px 'Liberation Sans',sans-serif;color:#000;">Bends:4</div>
<div class="t" style="left:309px;top:335px;font:11px/12px 'Liberation Sans',sans-serif;color:#000;">L:469.427(500)</div>
<div class="t" style="left:398px;top:335px;font:11px/12px 'Liberation Sans',sans-serif;color:#000;">W:100</div>
<div class="t" style="left:441px;top:335px;font:11px/12px 'Liberation Sans',sans-serif;color:#000;">Qty:100</div>
<div class="t" style="left:491px;top:335px;font:11px/12px 'Liberation Sans',sans-serif;color:#000;">Tot Wt:146.46 kg</div>
<div class="t" style="left:581px;top:335px;font:11px/12px 'Liberation Sans',sans-serif;color:#000;">Max F:3.39 tn</div>
<div class="t" style="left:12px;top:352px;font:bold 12px/14px 'Liberation Sans',sans-serif;color:#000;letter-spacing:0.3px;">Parts Table</div>
<div class="r" style="left:12px;top:367px;width:471px;height:1px;background:#ACA899"></div>
<div class="r" style="left:12px;top:367px;width:1px;height:180px;background:#ACA899"></div>
<div class="r" style="left:13px;top:368px;width:469px;height:1px;background:#716F64"></div>
<div class="r" style="left:13px;top:368px;width:1px;height:178px;background:#716F64"></div>
<div class="r" style="left:12px;top:546px;width:471px;height:1px;background:#FFFFFF"></div>
<div class="r" style="left:482px;top:367px;width:1px;height:180px;background:#FFFFFF"></div>
<div class="r" style="left:13px;top:545px;width:469px;height:1px;background:#F1EFE2"></div>
<div class="r" style="left:481px;top:368px;width:1px;height:178px;background:#F1EFE2"></div>
<div class="r" style="left:14px;top:369px;width:19px;height:1px;background:#fff"></div>
<div class="r" style="left:14px;top:369px;width:1px;height:30px;background:#fff"></div>
<div class="r" style="left:33px;top:369px;width:1px;height:31px;background:#000"></div>
<div class="r" style="left:14px;top:399px;width:20px;height:1px;background:#000"></div>
<div class="r" style="left:34px;top:369px;width:119px;height:1px;background:#fff"></div>
<div class="r" style="left:34px;top:369px;width:1px;height:30px;background:#fff"></div>
<div class="r" style="left:153px;top:369px;width:1px;height:31px;background:#000"></div>
<div class="r" style="left:34px;top:399px;width:120px;height:1px;background:#000"></div>
<div class="r" style="left:154px;top:369px;width:67px;height:1px;background:#fff"></div>
<div class="r" style="left:154px;top:369px;width:1px;height:30px;background:#fff"></div>
<div class="r" style="left:221px;top:369px;width:1px;height:31px;background:#000"></div>
<div class="r" style="left:154px;top:399px;width:68px;height:1px;background:#000"></div>
<div class="r" style="left:222px;top:369px;width:67px;height:1px;background:#fff"></div>
<div class="r" style="left:222px;top:369px;width:1px;height:30px;background:#fff"></div>
<div class="r" style="left:289px;top:369px;width:1px;height:31px;background:#000"></div>
<div class="r" style="left:222px;top:399px;width:68px;height:1px;background:#000"></div>
<div class="r" style="left:290px;top:369px;width:43px;height:1px;background:#fff"></div>
<div class="r" style="left:290px;top:369px;width:1px;height:30px;background:#fff"></div>
<div class="r" style="left:333px;top:369px;width:1px;height:31px;background:#000"></div>
<div class="r" style="left:290px;top:399px;width:44px;height:1px;background:#000"></div>
<div class="r" style="left:334px;top:369px;width:123px;height:1px;background:#fff"></div>
<div class="r" style="left:334px;top:369px;width:1px;height:30px;background:#fff"></div>
<div class="r" style="left:457px;top:369px;width:1px;height:31px;background:#000"></div>
<div class="r" style="left:334px;top:399px;width:124px;height:1px;background:#000"></div>
<div class="r" style="left:14px;top:400px;width:19px;height:1px;background:#fff"></div>
<div class="r" style="left:14px;top:400px;width:1px;height:15px;background:#fff"></div>
<div class="r" style="left:33px;top:400px;width:1px;height:16px;background:#000"></div>
<div class="r" style="left:14px;top:415px;width:20px;height:1px;background:#000"></div>
<div class="r" style="left:34px;top:400px;width:119px;height:15px;background:#FFFFFF"></div>
<div class="r" style="left:153px;top:400px;width:1px;height:16px;background:repeating-linear-gradient(to bottom,#000 0,#000 1px,transparent 1px,transparent 2px)"></div>
<div class="r" style="left:34px;top:415px;width:120px;height:1px;background:repeating-linear-gradient(to right,#000 0,#000 1px,transparent 1px,transparent 2px)"></div>
<div class="r" style="left:154px;top:400px;width:67px;height:15px;background:#C5C3C6"></div>
<div class="r" style="left:221px;top:400px;width:1px;height:16px;background:repeating-linear-gradient(to bottom,#000 0,#000 1px,transparent 1px,transparent 2px)"></div>
<div class="r" style="left:154px;top:415px;width:68px;height:1px;background:repeating-linear-gradient(to right,#000 0,#000 1px,transparent 1px,transparent 2px)"></div>
<div class="r" style="left:222px;top:400px;width:67px;height:15px;background:#FFFFFF"></div>
<div class="r" style="left:289px;top:400px;width:1px;height:16px;background:repeating-linear-gradient(to bottom,#000 0,#000 1px,transparent 1px,transparent 2px)"></div>
<div class="r" style="left:222px;top:415px;width:68px;height:1px;background:repeating-linear-gradient(to right,#000 0,#000 1px,transparent 1px,transparent 2px)"></div>
<div class="r" style="left:290px;top:400px;width:43px;height:15px;background:#FFFFFF"></div>
<div class="r" style="left:333px;top:400px;width:1px;height:16px;background:repeating-linear-gradient(to bottom,#000 0,#000 1px,transparent 1px,transparent 2px)"></div>
<div class="r" style="left:290px;top:415px;width:44px;height:1px;background:repeating-linear-gradient(to right,#000 0,#000 1px,transparent 1px,transparent 2px)"></div>
<div class="r" style="left:334px;top:400px;width:123px;height:15px;background:#FFFFFF"></div>
<div class="r" style="left:457px;top:400px;width:1px;height:16px;background:repeating-linear-gradient(to bottom,#000 0,#000 1px,transparent 1px,transparent 2px)"></div>
<div class="r" style="left:334px;top:415px;width:124px;height:1px;background:repeating-linear-gradient(to right,#000 0,#000 1px,transparent 1px,transparent 2px)"></div>
<div class="r" style="left:14px;top:416px;width:19px;height:1px;background:#fff"></div>
<div class="r" style="left:14px;top:416px;width:1px;height:15px;background:#fff"></div>
<div class="r" style="left:33px;top:416px;width:1px;height:16px;background:#000"></div>
<div class="r" style="left:14px;top:431px;width:20px;height:1px;background:#000"></div>
<div class="r" style="left:34px;top:416px;width:119px;height:15px;background:#FFFFFF"></div>
<div class="r" style="left:153px;top:416px;width:1px;height:16px;background:repeating-linear-gradient(to bottom,#000 0,#000 1px,transparent 1px,transparent 2px)"></div>
<div class="r" style="left:34px;top:431px;width:120px;height:1px;background:repeating-linear-gradient(to right,#000 0,#000 1px,transparent 1px,transparent 2px)"></div>
<div class="r" style="left:154px;top:416px;width:67px;height:15px;background:#C5C3C6"></div>
<div class="r" style="left:221px;top:416px;width:1px;height:16px;background:repeating-linear-gradient(to bottom,#000 0,#000 1px,transparent 1px,transparent 2px)"></div>
<div class="r" style="left:154px;top:431px;width:68px;height:1px;background:repeating-linear-gradient(to right,#000 0,#000 1px,transparent 1px,transparent 2px)"></div>
<div class="r" style="left:222px;top:416px;width:67px;height:15px;background:#FFFFFF"></div>
<div class="r" style="left:289px;top:416px;width:1px;height:16px;background:repeating-linear-gradient(to bottom,#000 0,#000 1px,transparent 1px,transparent 2px)"></div>
<div class="r" style="left:222px;top:431px;width:68px;height:1px;background:repeating-linear-gradient(to right,#000 0,#000 1px,transparent 1px,transparent 2px)"></div>
<div class="r" style="left:290px;top:416px;width:43px;height:15px;background:#FFFFFF"></div>
<div class="r" style="left:333px;top:416px;width:1px;height:16px;background:repeating-linear-gradient(to bottom,#000 0,#000 1px,transparent 1px,transparent 2px)"></div>
<div class="r" style="left:290px;top:431px;width:44px;height:1px;background:repeating-linear-gradient(to right,#000 0,#000 1px,transparent 1px,transparent 2px)"></div>
<div class="r" style="left:334px;top:416px;width:123px;height:15px;background:#FFFFFF"></div>
<div class="r" style="left:457px;top:416px;width:1px;height:16px;background:repeating-linear-gradient(to bottom,#000 0,#000 1px,transparent 1px,transparent 2px)"></div>
<div class="r" style="left:334px;top:431px;width:124px;height:1px;background:repeating-linear-gradient(to right,#000 0,#000 1px,transparent 1px,transparent 2px)"></div>
<div class="t" style="left:78px;top:378px;font:bold 11px/12px 'Liberation Sans',sans-serif;color:#000;letter-spacing:0.7px;">Name</div>
<div class="t" style="left:157px;top:378px;font:bold 11px/12px 'Liberation Sans',sans-serif;color:#000;letter-spacing:0.35px;">Flat Length</div>
<div class="t" style="left:240px;top:378px;font:bold 11px/12px 'Liberation Sans',sans-serif;color:#000;letter-spacing:0.4px;">Width</div>
<div class="t" style="left:302px;top:378px;font:bold 11px/12px 'Liberation Sans',sans-serif;color:#000;letter-spacing:0.4px;">Qty</div>
<div class="t" style="left:369px;top:378px;font:bold 11px/12px 'Liberation Sans',sans-serif;color:#000;letter-spacing:0.7px;">Remarks</div>
<div class="t" style="left:16px;top:401px;font:11px/12px 'Liberation Sans',sans-serif;color:#000;letter-spacing:-0.2px;">1</div>
<div class="t" style="left:35px;top:401px;font:11px/12px 'Liberation Sans',sans-serif;color:#000;letter-spacing:-0.2px;">p1</div>
<div class="t" style="left:100px;top:401px;font:11px/12px 'Liberation Sans',sans-serif;color:#000;letter-spacing:-0.2px;width:118px;text-align:right;">469.427</div>
<div class="t" style="left:150px;top:401px;font:11px/12px 'Liberation Sans',sans-serif;color:#000;letter-spacing:-0.2px;width:137px;text-align:right;">100</div>
<div class="t" style="left:230px;top:401px;font:11px/12px 'Liberation Sans',sans-serif;color:#000;letter-spacing:-0.2px;width:100px;text-align:right;">100</div>
<div class="t" style="left:16px;top:417px;font:11px/12px 'Liberation Sans',sans-serif;color:#000;letter-spacing:-0.2px;">2</div>
<div class="t" style="left:35px;top:417px;font:11px/12px 'Liberation Sans',sans-serif;color:#000;letter-spacing:-0.2px;">p2</div>
<div class="t" style="left:100px;top:417px;font:11px/12px 'Liberation Sans',sans-serif;color:#000;letter-spacing:-0.2px;width:118px;text-align:right;">584.713</div>
<div class="t" style="left:150px;top:417px;font:11px/12px 'Liberation Sans',sans-serif;color:#000;letter-spacing:-0.2px;width:137px;text-align:right;">200</div>
<div class="t" style="left:230px;top:417px;font:11px/12px 'Liberation Sans',sans-serif;color:#000;letter-spacing:-0.2px;width:100px;text-align:right;">100</div>
<div class="r" style="left:222px;top:400px;width:67px;height:15px;box-sizing:border-box;border:2px solid #000"></div>
<div class="r" style="left:485px;top:353px;width:298px;height:195px;background:#F7F5EC"></div>
<div class="r" style="left:486px;top:354px;width:296px;height:193px;background:#000"></div>
<div class="r" style="left:487px;top:355px;width:294px;height:191px;background:#FFFFFF"></div>
<div class="r" style="left:488px;top:356px;width:292px;height:189px;background:#F9EBE9"></div>
<div class="r" style="left:497px;top:367px;width:86px;height:4px;background:#000"></div>
<div class="r" style="left:497px;top:367px;width:4px;height:87px;background:#000"></div>
<div class="r" style="left:497px;top:450px;width:86px;height:4px;background:#000"></div>
<div class="r" style="left:579px;top:450px;width:4px;height:86px;background:#000"></div>
<div class="r" style="left:497px;top:532px;width:86px;height:4px;background:#000"></div>
<div class="r" style="left:497px;top:367px;width:1px;height:1px;background:#F9EBE9"></div>
<div class="r" style="left:582px;top:367px;width:1px;height:1px;background:#F9EBE9"></div>
<div class="r" style="left:582px;top:370px;width:1px;height:1px;background:#F9EBE9"></div>
<div class="r" style="left:497px;top:453px;width:1px;height:1px;background:#F9EBE9"></div>
<div class="r" style="left:582px;top:450px;width:1px;height:1px;background:#F9EBE9"></div>
<div class="r" style="left:582px;top:535px;width:1px;height:1px;background:#F9EBE9"></div>
<div class="r" style="left:497px;top:532px;width:1px;height:1px;background:#F9EBE9"></div>
<div class="r" style="left:497px;top:535px;width:1px;height:1px;background:#F9EBE9"></div>
<div class="r" style="left:486px;top:366px;width:3px;height:4px;background:#000"></div>
<div class="r" style="left:486px;top:370px;width:2px;height:1px;background:#000"></div>
<div class="t" style="left:534px;top:358px;font:11px/12px 'Liberation Sans',sans-serif;color:#000;">100</div>
<div class="t" style="left:503px;top:411px;font:11px/12px 'Liberation Sans',sans-serif;color:#000;">100</div>
<div class="t" style="left:534px;top:442px;font:11px/12px 'Liberation Sans',sans-serif;color:#000;">100</div>
<div class="t" style="left:585px;top:494px;font:11px/12px 'Liberation Sans',sans-serif;color:#000;">100</div>
<div class="t" style="left:534px;top:525px;font:11px/12px 'Liberation Sans',sans-serif;color:#000;">100</div>
<div class="r" style="left:4px;top:551px;width:785px;height:1px;background:#F1EFE2"></div>
<div class="r" style="left:4px;top:552px;width:785px;height:1px;background:#fff"></div>
<div class="r" style="left:4px;top:553px;width:785px;height:18px;background:#EAE8DB"></div>
<div class="t" style="left:5px;top:557px;font:11px/12px 'Liberation Sans',sans-serif;color:#000;letter-spacing:-0.15px;">For Help, press F1</div>
<div class="r" style="left:681px;top:555px;width:26px;height:1px;background:#ACA899"></div>
<div class="r" style="left:681px;top:555px;width:1px;height:15px;background:#ACA899"></div>
<div class="r" style="left:681px;top:570px;width:26px;height:1px;background:#fff"></div>
<div class="r" style="left:706px;top:555px;width:1px;height:16px;background:#fff"></div>
<div class="r" style="left:708px;top:555px;width:29px;height:1px;background:#ACA899"></div>
<div class="r" style="left:708px;top:555px;width:1px;height:15px;background:#ACA899"></div>
<div class="r" style="left:708px;top:570px;width:29px;height:1px;background:#fff"></div>
<div class="r" style="left:736px;top:555px;width:1px;height:16px;background:#fff"></div>
<div class="r" style="left:738px;top:555px;width:32px;height:1px;background:#ACA899"></div>
<div class="r" style="left:738px;top:555px;width:1px;height:15px;background:#ACA899"></div>
<div class="r" style="left:738px;top:570px;width:32px;height:1px;background:#fff"></div>
<div class="r" style="left:769px;top:555px;width:1px;height:16px;background:#fff"></div>
<div class="t" style="left:710px;top:557px;font:11px/12px 'Liberation Sans',sans-serif;color:#000;">NUM</div>
<svg class="r" style="left:775px;top:557px" width="14" height="14" shape-rendering="crispEdges"><path d="M13 1L1 13M13 5L5 13M13 9L9 13" stroke="#ACA899" stroke-width="1.5"/><path d="M13 2L2 13M13 6L6 13M13 10L10 13" stroke="#fff" stroke-width="1"/></svg>
</body></html>
